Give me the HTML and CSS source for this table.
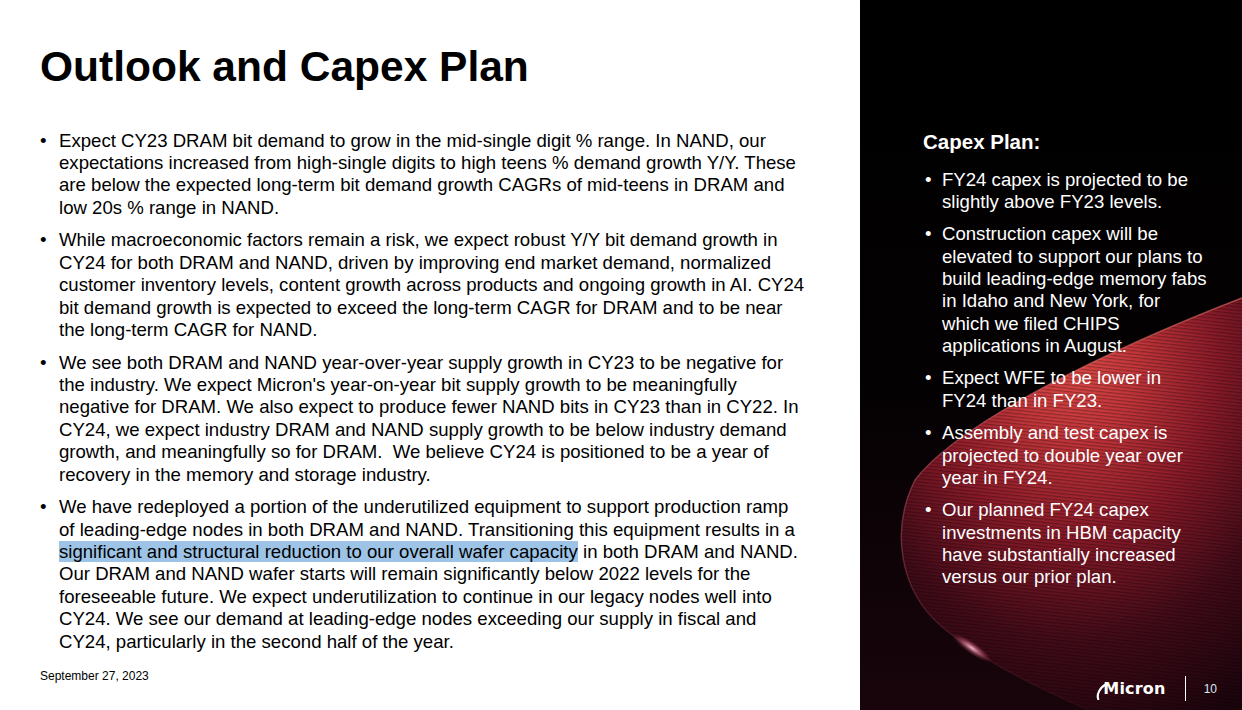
FILE: index.html
```html
<!DOCTYPE html>
<html lang="en">
<head>
<meta charset="utf-8">
<title>Outlook and Capex Plan</title>
<link rel="stylesheet" href="styles.css">
</head>
<body>
<div class="slide">
  <main class="main">
    <h1 class="title">Outlook and Capex Plan</h1>
    <ul class="bullets">
      <li><div class="txt">Expect CY23 DRAM bit demand to grow in the mid-single digit % range. In NAND, our<br>expectations increased from high-single digits to high teens % demand growth Y/Y. These<br>are below the expected long-term bit demand growth CAGRs of mid-teens in DRAM and<br>low 20s % range in NAND.</div></li>
      <li><div class="txt">While macroeconomic factors remain a risk, we expect robust Y/Y bit demand growth in<br>CY24 for both DRAM and NAND, driven by improving end market demand, normalized<br>customer inventory levels, content growth across products and ongoing growth in AI. CY24<br>bit demand growth is expected to exceed the long-term CAGR for DRAM and to be near<br>the long-term CAGR for NAND.</div></li>
      <li><div class="txt">We see both DRAM and NAND year-over-year supply growth in CY23 to be negative for<br>the industry. We expect Micron's year-on-year bit supply growth to be meaningfully<br>negative for DRAM. We also expect to produce fewer NAND bits in CY23 than in CY22. In<br>CY24, we expect industry DRAM and NAND supply growth to be below industry demand<br>growth, and meaningfully so for DRAM.&nbsp; We believe CY24 is positioned to be a year of<br>recovery in the memory and storage industry.</div></li>
      <li><div class="txt">We have redeployed a portion of the underutilized equipment to support production ramp<br>of leading-edge nodes in both DRAM and NAND. Transitioning this equipment results in a<br><span class="hl">significant and structural reduction to our overall wafer capacity</span> in both DRAM and NAND.<br>Our DRAM and NAND wafer starts will remain significantly below 2022 levels for the<br>foreseeable future. We expect underutilization to continue in our legacy nodes well into<br>CY24. We see our demand at leading-edge nodes exceeding our supply in fiscal and<br>CY24, particularly in the second half of the year.</div></li>
    </ul>
    <div class="date">September 27, 2023</div>
  </main>
  <aside class="side">
    <svg class="wafer" viewBox="0 0 382 710" width="382" height="710" aria-hidden="true">
      <defs>
        <linearGradient id="bg" x1="0" y1="0" x2="0" y2="1">
          <stop offset="0" stop-color="#000"/>
          <stop offset="0.55" stop-color="#040103"/>
          <stop offset="1" stop-color="#18050b"/>
        </linearGradient>
        <radialGradient id="waferFill" cx="0.5" cy="0.14" r="0.95">
          <stop offset="0" stop-color="#dc4a46"/>
          <stop offset="0.2" stop-color="#c2363a"/>
          <stop offset="0.45" stop-color="#881a28"/>
          <stop offset="0.72" stop-color="#420b18"/>
          <stop offset="1" stop-color="#1c040c"/>
        </radialGradient>
        <pattern id="stripes" patternUnits="userSpaceOnUse" width="6" height="3.4" patternTransform="rotate(6)">
          <rect x="0" y="0" width="6" height="1.2" fill="#000"/>
        </pattern>
        <radialGradient id="glare" cx="0.5" cy="0.5" r="0.5">
          <stop offset="0" stop-color="#ffd0dc" stop-opacity="0.9"/>
          <stop offset="0.5" stop-color="#e87898" stop-opacity="0.45"/>
          <stop offset="1" stop-color="#a03050" stop-opacity="0"/>
        </radialGradient>
        <linearGradient id="rim" x1="0" y1="0" x2="0" y2="1">
          <stop offset="0" stop-color="#ff7a70" stop-opacity="0.55"/>
          <stop offset="0.6" stop-color="#e06a88" stop-opacity="0.35"/>
          <stop offset="1" stop-color="#b04060" stop-opacity="0.05"/>
        </linearGradient>
      </defs>
      <rect x="0" y="0" width="382" height="710" fill="url(#bg)"/>
      <path d="M382,298 C260,345 100,420 55,480 C30,530 40,590 80,625 C120,660 180,690 240,715 L382,715 Z" fill="url(#waferFill)"/>
      <path d="M382,298 C260,345 100,420 55,480 C30,530 40,590 80,625 C120,660 180,690 240,715 L382,715 Z" fill="url(#stripes)" opacity="0.28"/>
      <path d="M382,298 C260,345 100,420 55,480 C30,530 40,590 80,625 C120,660 180,690 240,715" fill="none" stroke="url(#rim)" stroke-width="1.4"/>
      <ellipse cx="112" cy="648" rx="24" ry="6" transform="rotate(35 112 648)" fill="url(#glare)"/>
    </svg>
    <h2 class="side-title">Capex Plan:</h2>
    <ul class="bullets side-bullets">
      <li><div class="txt">FY24 capex is projected to be<br>slightly above FY23 levels.</div></li>
      <li><div class="txt">Construction capex will be<br>elevated to support our plans to<br>build leading-edge memory fabs<br>in Idaho and New York, for<br>which we filed CHIPS<br>applications in August.</div></li>
      <li><div class="txt">Expect WFE to be lower in<br>FY24 than in FY23.</div></li>
      <li><div class="txt">Assembly and test capex is<br>projected to double year over<br>year in FY24.</div></li>
      <li><div class="txt">Our planned FY24 capex<br>investments in HBM capacity<br>have substantially increased<br>versus our prior plan.</div></li>
    </ul>
    <footer class="side-foot">
      <div class="logo">
        <svg class="swoosh" viewBox="0 0 12 18" width="12" height="18" aria-hidden="true">
          <path d="M2.2,17 C0.6,12.5 3.5,5.5 10.5,2" fill="none" stroke="#fff" stroke-width="2.2" stroke-linecap="round"/>
        </svg>
        <span class="logo-text">Micron</span>
      </div>
      <div class="divider"></div>
      <div class="page">10</div>
    </footer>
  </aside>
</div>
</body>
</html>
```
FILE: styles.css
```css
* { box-sizing: border-box; }
html, body { margin: 0; padding: 0; }
body {
  width: 1242px;
  height: 710px;
  overflow: hidden;
  background: #fff;
  font-family: "Liberation Sans", Arial, sans-serif;
}
.slide {
  display: flex;
  width: 1242px;
  height: 710px;
}
.main {
  width: 860px;
  height: 710px;
  display: flex;
  flex-direction: column;
  padding: 46px 0 27px 40px;
  color: #000;
}
.title {
  margin: 0;
  font-size: 42.5px;
  line-height: 42px;
  font-weight: 700;
  letter-spacing: 0;
}
.bullets {
  list-style: none;
  margin: 41.5px 0 0 0;
  padding: 0;
  font-size: 18.6px;
  line-height: 22.35px;
}
.bullets li {
  display: flex;
  margin-bottom: 10.6px;
}
.bullets li:last-child { margin-bottom: 0; }
.bullets li::before {
  content: "\2022";
  flex: none;
  width: 19px;
}
.txt { white-space: nowrap; }
.hl { background: #9dc3e6; }
.date {
  margin-top: auto;
  font-size: 12px;
  line-height: 14px;
}
.side {
  position: relative;
  width: 382px;
  height: 710px;
  background: #000;
  color: #fff;
  display: flex;
  flex-direction: column;
  padding: 130px 0 9px 63px;
  overflow: hidden;
}
.wafer {
  position: absolute;
  left: 0;
  top: 0;
  z-index: 0;
}
.side-title, .side-bullets, .side-foot { position: relative; z-index: 1; }
.side-title {
  margin: 0;
  font-size: 20.5px;
  line-height: 24px;
  font-weight: 700;
}
.side-bullets {
  margin: 14.5px 0 0 2px;
}
.side-bullets li { margin-bottom: 10.1px; }
.side-bullets li::before { width: 17px; }
.side-foot {
  margin-top: auto;
  height: 25px;
  display: flex;
  align-items: center;
  justify-content: flex-end;
  padding-right: 25px;
}
.logo {
  display: flex;
  align-items: center;
  margin-right: 19px;
}
.swoosh { margin-right: -5px; margin-top: 4px; }
.logo-text {
  font-family: "DejaVu Sans", sans-serif;
  font-weight: 700;
  font-size: 16px;
  line-height: 18px;
  letter-spacing: 0.2px;
  color: #fff;
}
.divider {
  width: 1px;
  height: 25px;
  background: #fff;
  margin-right: 18px;
}
.page {
  font-size: 12px;
  line-height: 14px;
  color: #dce7f3;
}
```
